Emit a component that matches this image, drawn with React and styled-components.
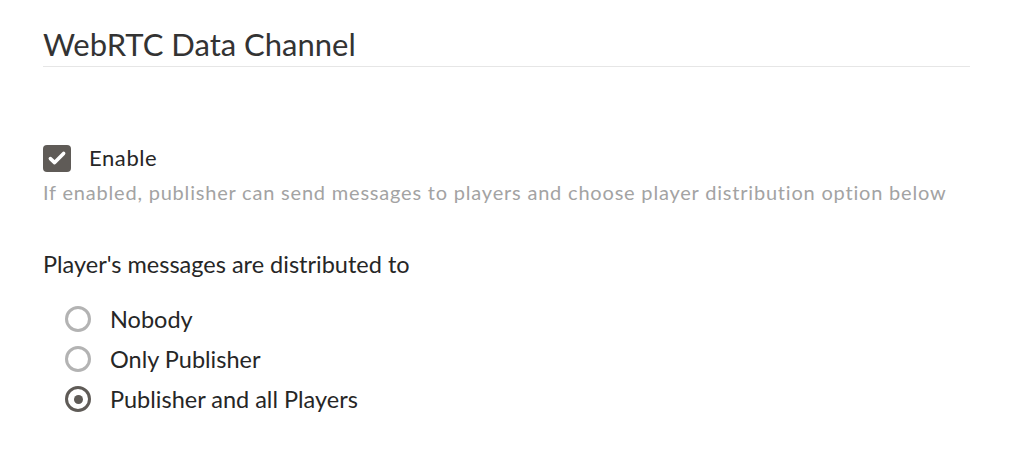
import React, { useState } from 'react';
import styled, { createGlobalStyle } from 'styled-components';

const GlobalStyle = createGlobalStyle`
  html, body {
    margin: 0;
    padding: 0;
    background: #ffffff;
  }
  body {
    font-family: 'Lato', 'Liberation Sans', sans-serif;
    color: #2b2b2b;
  }
`;

const colors = {
  heading: '#333333',
  text: '#262626',
  muted: '#a3a3a3',
  rule: '#e6e6e6',
  control: '#5f5b57',
  radioOff: '#b3b3b3',
};

const options = [
  { id: 'nobody', label: 'Nobody' },
  { id: 'publisher', label: 'Only Publisher' },
  { id: 'all', label: 'Publisher and all Players' },
];

const App = () => {
  const [enabled, setEnabled] = useState(true);
  const [target, setTarget] = useState('all');

  return (
    <Page>
      <GlobalStyle />
      <Section>
        <Title>WebRTC Data Channel</Title>

        <CheckRow onClick={() => setEnabled(!enabled)}>
          <CheckBox checked={enabled}>
            {enabled && (
              <svg width="20" height="20" viewBox="0 0 20 20">
                <path d="M3.4 10.6 L7.6 14.6 L16.6 5.4" fill="none" stroke="#fff" strokeWidth="3.6" strokeLinecap="round" strokeLinejoin="round" />
              </svg>
            )}
          </CheckBox>
          <CheckLabel>Enable</CheckLabel>
        </CheckRow>
        <Help>If enabled, publisher can send messages to players and choose player distribution option below</Help>

        <GroupLabel>Player's messages are distributed to</GroupLabel>
        <RadioList>
          {options.map((o) => (
            <RadioRow key={o.id} onClick={() => setTarget(o.id)}>
              <Radio checked={target === o.id} />
              <RadioLabel>{o.label}</RadioLabel>
            </RadioRow>
          ))}
        </RadioList>
      </Section>
    </Page>
  );
};

const Page = styled.div`
  width: 1024px;
  min-height: 462px;
  box-sizing: border-box;
  padding: 26px 54px 0 43px;
`;

const Section = styled.section`
  display: flex;
  flex-direction: column;
`;

const Title = styled.h2`
  margin: 0;
  padding-bottom: 4px;
  border-bottom: 1px solid ${colors.rule};
  font-size: 31px;
  line-height: 36px;
  font-weight: 400;
  color: ${colors.heading};
`;

const CheckRow = styled.label`
  display: flex;
  align-items: center;
  gap: 18px;
  margin-top: 77px;
  cursor: pointer;
`;

const CheckBox = styled.span`
  width: 28px;
  height: 27px;
  border-radius: 4px;
  background: ${(p) => (p.checked ? colors.control : '#fff')};
  border: ${(p) => (p.checked ? 'none' : `2px solid ${colors.radioOff}`)};
  box-sizing: border-box;
  display: flex;
  align-items: center;
  justify-content: center;
`;

const CheckLabel = styled.span`
  font-size: 22px;
  line-height: 28px;
  letter-spacing: 0.6px;
  color: ${colors.text};
`;

const Help = styled.p`
  margin: 7px 0 0;
  font-size: 20px;
  line-height: 26px;
  letter-spacing: 0.8px;
  color: ${colors.muted};
`;

const GroupLabel = styled.p`
  margin: 44px 0 0;
  font-size: 23.5px;
  line-height: 30px;
  color: ${colors.text};
`;

const RadioList = styled.div`
  display: flex;
  flex-direction: column;
  gap: 10px;
  margin-top: 25px;
  padding-left: 22px;
`;

const RadioRow = styled.label`
  display: flex;
  align-items: center;
  gap: 19px;
  cursor: pointer;
`;

const Radio = styled.span`
  width: 26px;
  height: 26px;
  box-sizing: border-box;
  border-radius: 50%;
  border: 3.5px solid ${(p) => (p.checked ? colors.control : colors.radioOff)};
  display: flex;
  align-items: center;
  justify-content: center;

  &::after {
    content: '';
    width: 9px;
    height: 9px;
    border-radius: 50%;
    background: ${colors.control};
    display: ${(p) => (p.checked ? 'block' : 'none')};
  }
`;

const RadioLabel = styled.span`
  font-size: 23.5px;
  line-height: 30px;
  color: ${colors.text};
`;

export default App;
